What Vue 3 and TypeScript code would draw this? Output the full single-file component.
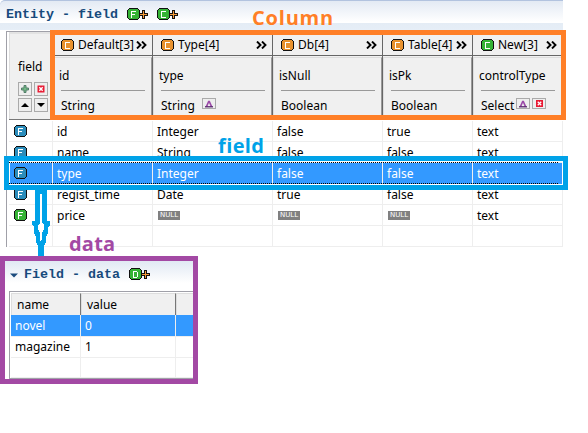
<script setup lang="ts">
import { h, type FunctionalComponent } from 'vue'

interface Column { name: string; color: string; prop: string; type: string; buttons: string[]; width: number }

const columns: Column[] = [
  { name: 'Default[3]', color: '#e8912d', prop: 'id', type: 'String', buttons: [], width: 100 },
  { name: 'Type[4]', color: '#e8912d', prop: 'type', type: 'String', buttons: ['up'], width: 120 },
  { name: 'Db[4]', color: '#e8912d', prop: 'isNull', type: 'Boolean', buttons: [], width: 110 },
  { name: 'Table[4]', color: '#e8912d', prop: 'isPk', type: 'Boolean', buttons: [], width: 90 },
  { name: 'New[3]', color: '#35b335', prop: 'controlType', type: 'Select', buttons: ['up', 'del'], width: 90 },
]
const rows: string[][] = [
  ['id', 'Integer', 'false', 'true', 'text'],
  ['name', 'String', 'false', 'false', 'text'],
  ['type', 'Integer', 'false', 'false', 'text'],
  ['regist_time', 'Date', 'true', 'false', 'text'],
  ['price', 'NULL', 'NULL', 'NULL', 'text'],
  ['', '', '', '', ''],
]
const letters: Record<string, string> = {
  F: 'M4 3h5v1H5v2h3v1H5v3H4z',
  C: 'M4 3h5v1H5v5h4v1H4z',
  D: 'M4 3h4v1h1v5H8v1H4zM5 4v5h3V4z',
}
const Badge: FunctionalComponent<{ kind: string; color: string; plus?: boolean }> = (p) =>
  h('svg', { width: p.plus ? 22 : 13, height: 12, viewBox: `0 0 ${p.plus ? 22 : 13} 12`, 'shape-rendering': 'crispEdges' }, [
    h('path', { d: 'M2 0h9v1h1v1h1v8h-1v1h-1v1H2v-1H1v-1H0V2h1V1h1z', fill: '#111' }),
    h('path', { d: 'M2 1h9v1h1v8h-1v1H2v-1H1V2h1z', fill: p.color }),
    h('path', { d: letters[p.kind], fill: '#fff', 'fill-rule': 'evenodd', transform: 'translate(0 -.5)' }),
    p.plus ? h('path', { d: 'M15 2h3v3h3v3h-3v3h-3V8h-2V5h2z', fill: '#111' }) : null,
    p.plus ? h('path', { d: 'M16 3h1v3h3v1h-3v3h-1V7h-3V6h3z', fill: '#f29a3a' }) : null,
  ])
</script>

<template>
  <main class="page">
    <header class="title bar"><span class="mono">Entity - field</span><Badge kind="F" color="#35b335" :plus="true" /><Badge kind="C" color="#35b335" :plus="true" /></header>
    <section class="grid">
      <div class="head">
        <div class="corner">
          <span>field</span>
          <div class="tools">
            <i class="btn"><svg width="8" height="8" viewBox="0 0 8 8"><path d="M3 .5h2V3h2.5v2H5v2.5H3V5H.5V3H3z" fill="#72ba86" stroke="#537d69" /></svg></i>
            <i class="btn"><svg width="8" height="8" viewBox="0 0 8 8"><path d="M.5.5h7v7h-7z" fill="#e81932" /><path d="M2.300 2.300l3.400 3.400M5.700 2.300L2.300 5.700" stroke="#fff" stroke-width="1.400" /></svg></i>
            <i class="btn"><svg width="8" height="8" viewBox="0 0 8 8"><path d="M0 6l4-4 4 4z" /></svg></i>
            <i class="btn"><svg width="8" height="8" viewBox="0 0 8 8"><path d="M0 2l4 4 4-4z" /></svg></i>
          </div>
        </div>
        <div v-for="c in columns" :key="c.name" class="col" :style="{ width: c.width + 'px' }">
          <div class="colname"><Badge kind="C" :color="c.color" /><span>{{ c.name }}</span>
            <svg class="chev" width="11" height="8" viewBox="0 0 11 8"><path d="M1 .5L4.5 4 1 7.5M6 .5L9.5 4 6 7.5" fill="none" stroke="#000" stroke-width="1.9" /></svg>
          </div>
          <div class="colbody">
            <div class="prop">{{ c.prop }}</div>
            <div class="type" :class="{ tight: c.buttons.length > 1 }"><span>{{ c.type }}</span>
              <i v-for="b in c.buttons" :key="b" class="mini">
                <svg v-if="b === 'up'" width="8" height="8" viewBox="0 0 8 8"><path d="M1.500 6.500L3.700 1.500h.6L6.500 6.500" fill="none" stroke="#9b4aa8" stroke-width="1.700" /><path d="M0 6.200h8v1.200H0z" fill="#4b1763" /></svg>
                <svg v-else width="7" height="7" viewBox="0 0 8 8"><path d="M0 0h8v8H0z" fill="#e81932" /><path d="M2 2l4 4M6 2L2 6" stroke="#fff" stroke-width="1.4" /></svg>
              </i>
            </div>
          </div>
        </div>
      </div>
      <div v-for="(r, i) in rows" :key="i" class="row" :class="{ selected: i === 2 }">
        <div class="cell first"><Badge v-if="i < 5" kind="F" :color="i === 4 ? '#35b335' : '#2b8dbc'" /></div>
        <div v-for="(v, j) in r" :key="j" class="cell" :style="{ width: columns[j].width + 'px' }">
          <b v-if="v === 'NULL'" class="null">NULL</b><template v-else>{{ v }}</template>
        </div>
      </div>
    </section>

    <div class="frame orange"></div>
    <div class="frame blue"></div>
    <strong class="note n-col">Column</strong>
    <strong class="note n-field">field</strong>
    <strong class="note n-data">data</strong>
    <svg class="arrow" width="20" height="68" viewBox="0 0 20 68" shape-rendering="crispEdges">
      <path d="M5 0h12v31h3v4l-2 2v6l-2 4v5l-2 4v10H8V56l-2-4v-5l-2-4v-6l-2-2v-4h3z" fill="#00a2e8" />
      <path d="M10 4h2v29l2 2v4l-2 4v6l-1 3-1-3v-6l-2-4v-4l2-2z" fill="#fff" />
    </svg>

    <section class="panel">
      <header class="title sub"><svg width="8" height="5" viewBox="0 0 8 5"><path d="M0 .5h8l-4 4z" fill="#1b4b7d" /></svg><span class="mono">Field - data</span><Badge kind="D" color="#35b335" :plus="true" /></header>
      <div class="mini-grid">
        <div class="mrow mhead"><span>name</span><span>value</span><span></span></div>
        <div class="mrow chosen"><span>novel</span><span>0</span><span></span></div>
        <div class="mrow"><span>magazine</span><span>1</span><span></span></div>
        <div class="mrow"><span></span><span></span><span></span></div>
      </div>
    </section>
  </main>
</template>

<style>
body { background: #fff; }
</style>

<style scoped>
* { box-sizing: border-box; }
.page { position: relative; width: 588px; height: 433px; overflow: hidden; background: #fff; font: 12px/16px "Noto Sans", "Open Sans", sans-serif; color: #000; }
svg { display: block; flex: none; }
.title { display: flex; align-items: center; color: #174a7c; }
.mono { font: bold 13.33px/16px "Liberation Mono", monospace; white-space: pre; }
.bar { width: 563px; height: 31px; padding: 0 0 2px 6px; border-top: 1px solid #b2c3df; border-top-left-radius: 5px; background: linear-gradient(#e3eaf4, #fff 21px, #fff 22px, #e4ecf5 22px, #e6eef7 29px, #fff 29px); }
.bar .mono { width: 121px; }
.bar svg { margin-right: 8px; margin-top: -2px; }
.grid { width: 557px; height: 216px; margin-left: 6px; border-left: 1px solid #a0a0a8; border-top: 1px solid #a0a0a8; padding-left: 2px; }
.head { display: flex; height: 88px; width: 554px; background: #f0f0f0; border-bottom: 1px solid #777; }
.corner { width: 44px; padding: 25px 0 0 8px; border-left: 1px solid #ddd; border-top: 2px solid #e3e3e3; }
.corner > span { display: block; line-height: 16px; }
.tools { display: grid; grid-template-columns: 14px 14px; gap: 2px; margin-top: 7px; }
.btn { display: flex; align-items: center; justify-content: center; width: 14px; height: 14px; border: 1px solid #aaa; background: #eee; }
.col { border-right: 1px solid #666; }
.colname { display: flex; align-items: center; height: 24px; padding: 2px 5px 0 8px; border-bottom: 1px solid #666; }
.colname span { margin-left: 4px; white-space: nowrap; }
.chev { margin-left: auto; }
.colbody { height: 62px; margin-top: 1px; border-left: 1px solid #ddd; border-top: 1px solid #ddd; border-right: 1px solid #999; padding: 10px 6px 0 5px; }
.prop { position: relative; height: 23px; line-height: 16px; }
.prop::after { content: ""; position: absolute; left: 2px; right: 0; bottom: 0; height: 1px; background: #999; }
.type { display: flex; align-items: center; height: 30px; }
.type span { margin-left: 2px; }
.mini { display: flex; align-items: center; justify-content: center; width: 14px; height: 11px; border: 1px solid #aaa; background: #eee; margin: -5px 0 0 7px; }
.tight .mini { margin-left: 2px; }
.row { display: flex; height: 21px; background: #fff; }
.head + .row { margin-top: 1px; }
.cell { height: 21px; flex: none; border-right: 1px solid #eee; border-bottom: 1px solid #eee; padding-left: 4px; line-height: 21px; white-space: nowrap; }
.first { width: 44px; padding: 4px 0 0 5px; }
.selected .cell { background: #3399ff; color: #fff; border-bottom-color: #3399ff; }
.null { display: block; width: 22px; height: 9px; margin: 6px 0 0 1px; background: #808080; color: #fff; font: 7px/9px "DejaVu Sans", sans-serif; text-align: center; }
.frame { position: absolute; }
.orange { left: 50px; top: 30px; width: 516px; height: 90px; border: 5px solid #ff7f27; }
.blue { left: 4px; top: 156px; width: 564px; height: 34px; border: 5px solid #00a2e8; box-shadow: inset 0 0 0 1px #fff; }
.blue::after { content: ""; position: absolute; left: 0; right: 5px; top: 1px; bottom: 1px; border-top: 1px dotted #000; border-bottom: 1px dotted #000; }
.note { position: absolute; font: bold 20px/24px "Open Sans", sans-serif; }
.n-col { left: 252px; top: 6px; color: #ff7f27; letter-spacing: .8px; }
.n-field { left: 218px; top: 134px; color: #00a2e8; letter-spacing: .4px; }
.n-data { left: 69px; top: 232px; color: #a349a4; letter-spacing: .2px; }
.arrow { position: absolute; left: 30px; top: 190px; }
.panel { position: absolute; left: 0; top: 256px; width: 198px; height: 128px; border: 5px solid #a349a4; background: #fff; overflow: hidden; }
.sub { height: 30px; padding: 0 0 2px 5px; background: linear-gradient(#e1e9f4, #fff 22px); }
.sub .mono { margin-left: 6px; width: 105px; }
.sub svg:last-child { margin-top: -2px; }
.mini-grid { width: 190px; height: 88px; margin-left: 4px; border: 1px solid #a0a0a8; padding: 1px 0 0 1px; }
.mrow { display: grid; grid-template-columns: 70px 95px 30px; height: 21px; line-height: 21px; }
.mrow span { border-right: 1px solid #eee; border-bottom: 1px solid #eee; padding-left: 4px; }
.mhead { height: 22px; background: #f0f0f0; line-height: 22px; }
.mhead span { border: 1px solid #ddd; border-right-color: #777; border-bottom-color: #888; padding-left: 5px; }
.chosen span { background: #3399ff; color: #fff; }
</style>
